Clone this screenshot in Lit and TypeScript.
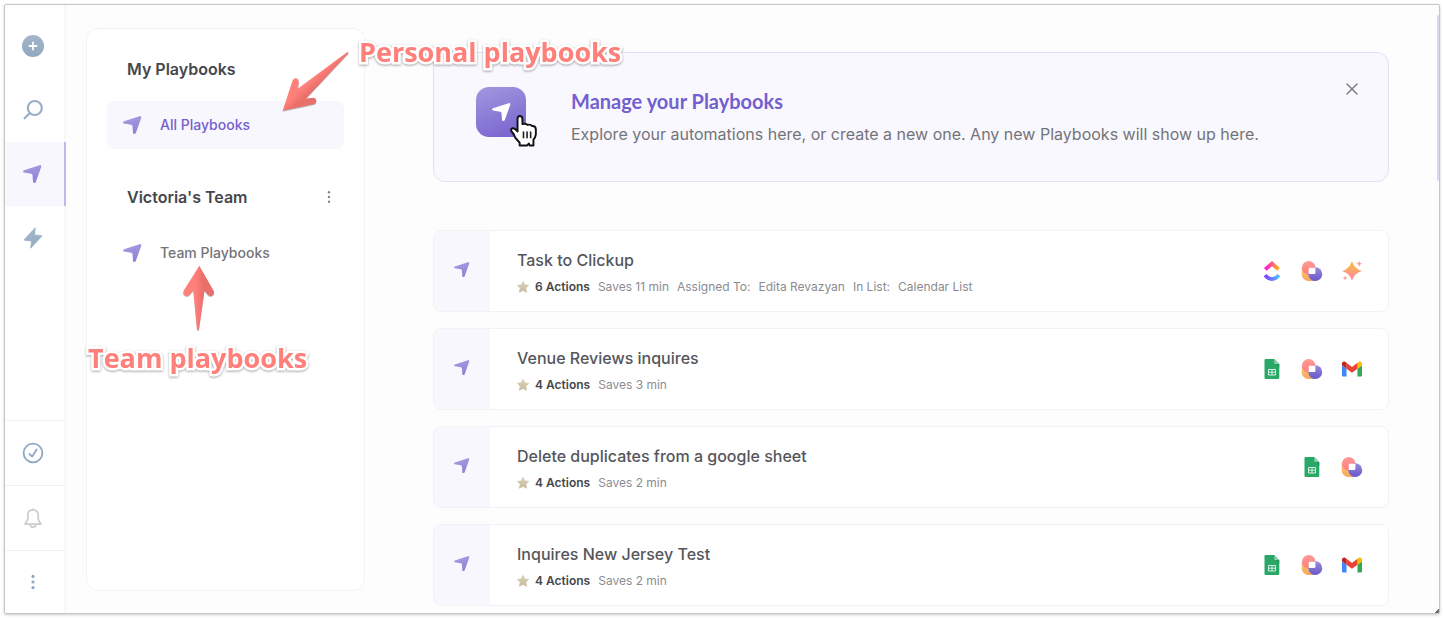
import { LitElement, html, css, svg, TemplateResult } from "lit";
import { customElement, property } from "lit/decorators.js";

const planePath =
  "M16.6.2 1 5.3C-.2 5.8-.3 7.3.9 7.6L8.2 8.8Q9.4 9 9.5 10.200L10 17Q10.200 18 11.300 18 12.400 18 12.800 17L18.200 2Q18.600-.5 16.600.2Z";

@customElement("plane-icon")
export class PlaneIcon extends LitElement {
  static styles = css`
    :host { display: block; width: 18px; height: 18px; }
    svg { display: block; width: 100%; height: 100%; overflow: visible; }
  `;
  @property({ type: Boolean }) plain = false;
  render() {
    return html`<svg viewBox="0 0 18 18" aria-hidden="true">
      <defs><linearGradient id="g" x1="0" y1="0" x2="0.3" y2="1">
        <stop offset="0" stop-color="#a99fe0" /><stop offset="1" stop-color="#9182d8" />
      </linearGradient></defs>
      <path d=${planePath} fill=${this.plain ? "#fff" : "url(#g)"} />
    </svg>`;
  }
}

type AppName = "clickup" | "bardeen" | "magic" | "sheets" | "gmail";

const appIcons: Record<AppName, TemplateResult> = {
  clickup: svg`<svg viewBox="0 0 24 24"><defs>
      <linearGradient id="up"><stop offset="0" stop-color="#ff02f0"/><stop offset=".5" stop-color="#fb5d80"/><stop offset="1" stop-color="#ffc800"/></linearGradient>
      <linearGradient id="dn"><stop offset="0" stop-color="#8930fd"/><stop offset="1" stop-color="#49ccf9"/></linearGradient></defs>
      <path fill="url(#dn)" d="M2 18.439l3.690-2.828c1.961 2.560 4.044 3.739 6.363 3.739 2.307 0 4.330-1.166 6.203-3.704L22 18.405C19.298 22.065 15.941 24 12.053 24 8.178 24 4.788 22.078 2 18.439z"/>
      <path fill="url(#up)" d="M12.040 6.150l-6.568 5.660-3.036-3.520L12.055 0l9.543 8.296-3.050 3.509z"/></svg>`,
  bardeen: svg`<svg viewBox="0 0 20 20"><defs>
      <linearGradient id="pk" x1="0" y1="0" x2="0" y2="1"><stop offset="0" stop-color="#ff9a98"/><stop offset="1" stop-color="#fd807d"/></linearGradient>
      <linearGradient id="pu" x1="0" y1="0" x2="0" y2="1"><stop offset="0" stop-color="#978bdb"/><stop offset="1" stop-color="#6a55cb"/></linearGradient>
      <linearGradient id="og" x1="0" y1="0" x2="0" y2="1"><stop offset="0" stop-color="#fcc274"/><stop offset="1" stop-color="#f6a85c"/></linearGradient></defs>
      <path fill="url(#og)" d="M-.3 7H13v13H6.500A6.800 6.800 0 0 1-.3 13.200z"/>
      <circle cx="6.700" cy="6.700" r="6.800" fill="url(#pk)"/>
      <circle cx="13.300" cy="13.200" r="6.900" fill="url(#pu)"/>
      <path fill="#fff" d="M6.700 8q0-1.300 1.300-1.300h5.400v5q0 1.400-1.400 1.400H6.700z"/></svg>`,
  magic: svg`<svg viewBox="0 0 20 20"><defs>
      <linearGradient id="mg" x1="0" y1="0" x2="0" y2="20" gradientUnits="userSpaceOnUse"><stop offset="0" stop-color="#fdb62b"/><stop offset=".4" stop-color="#fca964"/><stop offset=".7" stop-color="#fd9591"/><stop offset="1" stop-color="#fd9a98"/></linearGradient></defs>
      <path fill="url(#mg)" d="M10 0Q12.200 7.800 20 10 12.200 12.200 10 20 7.800 12.200 0 10 7.800 7.800 10 0z"/>
      <path fill="#fd9a93" d="M17.200-.2l.8 2.200 2.300.8-2.300.8-.8 2.300-.8-2.300-2.300-.8 2.300-.8zM3 14.800l.7 1.500 1.500.7-1.500.7L3 19.200l-.7-1.500-1.500-.7 1.500-.7z"/></svg>`,
  sheets: svg`<svg viewBox="0 0 20 20">
      <path fill="#2aa868" d="M3.700 0h8.600l5 5v13.700q0 1.300-1.300 1.300H3.700q-1.200 0-1.200-1.300V1.300Q2.500 0 3.700 0z"/>
      <path fill="#8ed1b1" d="M12.300 0l5 5h-4q-1 0-1-1z"/><path fill="#20905a" d="M13.300 5h4v4z" opacity=".6"/>
      <path fill="none" stroke="#d6efe3" stroke-width="1" d="M6.500 10.500h7v5.500h-7zM6.500 13.200h7M10 10.500v5.500"/></svg>`,
  gmail: svg`<svg viewBox="52 42 88 66">
      <path fill="#4285f4" d="M58 108h14V74L52 59v43c0 3.320 2.690 6 6 6"/>
      <path fill="#34a853" d="M120 108h14c3.320 0 6-2.690 6-6V59l-20 15"/>
      <path fill="#fbbc04" d="M120 48v26l20-15v-8c0-7.420-8.470-11.650-14.400-7.200"/>
      <path fill="#ea4335" d="M72 74V48l24 18 24-18v26L96 92"/>
      <path fill="#c5221f" d="M52 51v8l20 15V48l-5.600-4.200c-5.940-4.450-14.400-.22-14.400 7.200"/></svg>`,
};

interface Playbook {
  title: string;
  actions: number;
  meta: string[];
  apps: AppName[];
}

const playbooks: Playbook[] = [
  { title: "Task to Clickup", actions: 6, meta: ["Saves 11 min", "Assigned To:", "Edita Revazyan", "In List:", "Calendar List"], apps: ["clickup", "bardeen", "magic"] },
  { title: "Venue Reviews inquires", actions: 4, meta: ["Saves 3 min"], apps: ["sheets", "bardeen", "gmail"] },
  { title: "Delete duplicates from a google sheet", actions: 4, meta: ["Saves 2 min"], apps: ["sheets", "bardeen"] },
  { title: "Inquires New Jersey Test", actions: 4, meta: ["Saves 2 min"], apps: ["sheets", "bardeen", "gmail"] },
];

@customElement("playbook-card")
export class PlaybookCard extends LitElement {
  static styles = css`
    :host { display: block; }
    .card { display: flex; height: 80px; border: 1px solid #f2f2f4; border-radius: 8px; background: #fff; overflow: hidden; }
    .side { flex: none; width: 56px; display: flex; align-items: center; justify-content: center; background: #f8f7fd; padding: 0 2px 4px 0; box-sizing: border-box; }
    .side plane-icon { width: 15px; height: 15px; }
    .body { flex: 1; min-width: 0; padding: 17px 0 0 27px; }
    .title { margin: 0; font-size: 16px; line-height: 24px; font-weight: 500; color: #55565b; }
    .meta { display: flex; align-items: center; gap: 8px; margin-top: 5px; font-size: 12px; line-height: 20px; color: #8b8c91; white-space: nowrap; }
    .count { display: flex; align-items: center; gap: 6px; font-weight: 600; color: #46474c; }
    .count svg { width: 12px; height: 12px; display: block; }
    .apps { display: flex; align-items: center; gap: 20px; padding-right: 26px; }
    .apps svg { display: block; width: 20px; height: 20px; overflow: visible; }
  `;
  @property({ attribute: false }) playbook!: Playbook;
  render() {
    const p = this.playbook;
    return html`<article class="card">
      <div class="side"><plane-icon></plane-icon></div>
      <div class="body">
        <h3 class="title">${p.title}</h3>
        <div class="meta">
          <span class="count">
            <svg viewBox="0 0 12 12" aria-hidden="true"><defs><linearGradient id="s" x1="0" y1="0" x2="0" y2="1"><stop offset="0" stop-color="#d9d0b8"/><stop offset="1" stop-color="#c8bc9e"/></linearGradient></defs>
            <path fill="url(#s)" stroke="url(#s)" stroke-width=".9" stroke-linejoin="round" d="M6 .4l1.700 3.500 3.900.5-2.900 2.700.8 4.100L6 9.300l-3.500 1.900.8-4.100L.4 4.400 4.300 3.900z"/></svg>
            ${p.actions} Actions</span>
          ${p.meta.map((m) => html`<span>${m}</span>`)}
        </div>
      </div>
      <div class="apps">${p.apps.map((a) => appIcons[a])}</div>
    </article>`;
  }
}

@customElement("app-root")
export class AppRoot extends LitElement {
  static styles = css`
    :host { display: block; position: relative; box-sizing: border-box; height: 100vh; padding: 4px; background: #fff; font-family: Inter, "Liberation Sans", sans-serif; color: #46474c; }
    button { border: 0; padding: 0; background: none; font: inherit; color: inherit; cursor: pointer; }
    a { color: inherit; text-decoration: none; }
    svg { display: block; overflow: visible; }
    .window { position: relative; box-sizing: border-box; height: 100%; display: flex; border: 1px solid #c6c6c6; border-radius: 2px; box-shadow: 0 1px 3px rgba(0, 0, 0, 0.2); background: #fdfdfd; overflow: hidden; }
    .rail { flex: none; width: 61px; display: flex; flex-direction: column; justify-content: space-between; box-sizing: border-box; background: linear-gradient(90deg, #fff 59px, #f8f8f9 59px); }
    .rail-top { padding-top: 9px; }
    .rail-btn { display: flex; width: 61px; height: 64px; align-items: center; justify-content: center; box-sizing: border-box; padding-right: 5px; }
    .rail-btn.on { background: #f8f7fd; border-right: 2px solid #c0b8e9; }
    .rail-low { display: flex; width: 59px; height: 65px; align-items: center; justify-content: center; box-sizing: border-box; border-top: 1px solid #f0f1f2; padding-right: 3px; }
    .rail-low:last-child { height: 63px; }
    .panel { flex: none; width: 279px; box-sizing: border-box; margin: 23px 0 22px 20px; border: 1px solid #f3f3f4; border-radius: 12px; background: #fff; padding: 28px 20px; }
    .head { display: flex; justify-content: space-between; align-items: center; padding: 0 12px 0 20px; height: 24px; margin-bottom: 20px; }
    .head h2 { margin: 0; font-size: 16px; line-height: 24px; font-weight: 600; color: #46474c; }
    .item { display: flex; align-items: center; gap: 19px; height: 48px; padding-left: 16px; border-radius: 8px; margin-bottom: 36px; font-size: 14px; line-height: 20px; font-weight: 500; color: #737479; }
    .item.on { background: #f8f7fd; color: #7460cf; }
    .main { flex: 1; min-width: 0; padding: 47px 50px 0 68px; overflow: hidden; }
    .banner { display: flex; align-items: flex-start; box-sizing: border-box; min-height: 130px; margin-bottom: 48px; padding: 34px 30px 30px 42px; border: 1px solid #e2dff6; border-radius: 12px; background: #f9f8fe; }
    .tile { position: relative; flex: none; display: flex; align-items: center; justify-content: center; width: 50px; height: 50px; border-radius: 13px; background: linear-gradient(160deg, #a297e0, #7561cd); }
    .hand { position: absolute; left: 34px; top: 28px; width: 27px; height: 32px; }
    .copy { flex: 1; padding-left: 45px; }
    .copy h1 { margin: 0 0 7px; font-family: Lato, Inter, sans-serif; font-size: 20px; line-height: 28px; font-weight: 700; color: #7360ce; }
    .copy p { margin: 0; font-size: 16px; line-height: 24px; color: #737479; }
    .close { display: flex; align-items: center; justify-content: center; width: 12px; height: 12px; margin-top: -4px; }
    .list { display: grid; gap: 16px; }
    .thumb { position: absolute; right: 0; top: 10px; width: 2px; height: 166px; border-radius: 2px; background: #dcd8f4; }
    .grip { position: absolute; right: 0; bottom: 0; width: 4px; height: 4px; background: linear-gradient(135deg, transparent 50%, #6d6d6d 50%); }
    .note { position: absolute; font-family: "Open Sans", "Noto Sans", sans-serif; font-weight: 700; font-size: 27px; line-height: 36px; color: #ff7f7a; white-space: nowrap; -webkit-text-stroke: 5px #fff; paint-order: stroke fill; filter: drop-shadow(0 1px 1px rgba(0, 0, 0, 0.35)); }
    .personal { left: 359px; top: 34px; }
    .team { left: 88px; top: 340px; }
    .arrows { position: absolute; left: 0; top: 0; width: 400px; height: 400px; pointer-events: none; filter: drop-shadow(0 1px 0 rgba(0, 0, 0, 0.25)); }
  `;

  private dots(color: string, r: number, step: number) {
    return html`<svg width="6" height="18" viewBox="0 0 6 18" aria-hidden="true" fill=${color}>
      <circle cx="3" cy=${9 - step} r=${r} /><circle cx="3" cy="9" r=${r} /><circle cx="3" cy=${9 + step} r=${r} />
    </svg>`;
  }

  render() {
    return html`
      <div class="window">
        <nav class="rail" aria-label="Main">
          <div class="rail-top">
            <button class="rail-btn" aria-label="Create">
              <svg width="22" height="22" viewBox="0 0 22 22"><defs><linearGradient id="b" x1="0" y1="0" x2="0" y2="1"><stop offset="0" stop-color="#a4b5ca"/><stop offset="1" stop-color="#8fa8c0"/></linearGradient></defs>
              <circle cx="11" cy="11" r="11" fill="url(#b)"/><path d="M11 7.500v7M7.500 11h7" stroke="#fff" stroke-width="1.800" stroke-linecap="round"/></svg>
            </button>
            <button class="rail-btn" aria-label="Search">
              <svg width="20" height="20" viewBox="0 0 20 20" fill="none" stroke="#9ab0c6" stroke-width="2.200" stroke-linecap="round"><circle cx="11.800" cy="8" r="7"/><path d="M6.800 13.200L1.500 18.300"/></svg>
            </button>
            <button class="rail-btn on" aria-label="Playbooks"><plane-icon></plane-icon></button>
            <button class="rail-btn" aria-label="Autobooks">
              <svg width="18" height="22" viewBox="0 0 18 22"><defs><linearGradient id="z" x1="0" y1="0" x2="0" y2="1"><stop offset="0" stop-color="#a6b6cb"/><stop offset="1" stop-color="#93abc4"/></linearGradient></defs>
              <path fill="url(#z)" stroke="url(#z)" stroke-width=".6" stroke-linejoin="round" d="M11.300.6L.2 12.500q-.3.700.4.900L7.500 14 6.600 21.300 17.900 9.300q.3-.7-.4-.9L10.800 8z"/></svg>
            </button>
          </div>
          <div>
            <button class="rail-low" aria-label="Tasks">
              <svg width="20" height="20" viewBox="0 0 20 20" fill="none" stroke="#8fa9c4" stroke-width="1.800" stroke-linecap="round" stroke-linejoin="round"><circle cx="10" cy="10" r="9.400"/><path d="M6.300 11l2.900 2.500L13.600 6.500"/></svg>
            </button>
            <button class="rail-low" aria-label="Notifications">
              <svg width="18" height="20" viewBox="0 0 18 20" fill="none" stroke="#cbcccd" stroke-width="1.700" stroke-linejoin="round"><path d="M9 .4v1.400M9 1.800c-3.300 0-5.200 2.200-5.200 5.400v3.600c0 1.800-1.700 3.200-2.700 5.400h15.800c-1-2.200-2.700-3.600-2.700-5.400V7.200C14.200 4 12.300 1.800 9 1.800zM6.300 16.400c0 1.600 1.100 2.700 2.700 2.700s2.700-1.100 2.700-2.700"/></svg>
            </button>
            <button class="rail-low" aria-label="More">${this.dots("#8fa9c4", 1.6, 5.6)}</button>
          </div>
        </nav>

        <aside class="panel">
          <div class="head"><h2>My Playbooks</h2></div>
          <a class="item on" href="#all"><plane-icon></plane-icon>All Playbooks</a>
          <div class="head"><h2>Victoria's Team</h2><button aria-label="Team menu">${this.dots("#85868a", 1.2, 4.7)}</button></div>
          <a class="item" href="#team"><plane-icon></plane-icon>Team Playbooks</a>
        </aside>

        <main class="main">
          <section class="banner">
            <div class="tile">
              <plane-icon plain></plane-icon>
              <svg class="hand" viewBox="0 0 28 33" aria-hidden="true">
                <path fill="#fff" stroke="#111" stroke-width="2" stroke-linejoin="round" d="M7.800 3.800Q8 1 10.200 1 12.700 1 12.900 3.800V9.300Q17 8.300 18.200 10.200 21.500 9.200 22.800 11.300 26.500 11 26.800 14.500V20Q26.500 23 24.300 25.500V31.500H20.500L19.500 29.500 17.800 31.500H10V28.500L5.500 23.500Q4 19.500 1.300 16.500.6 14 3 13.700 5 13.500 7.800 17z"/>
                <path fill="none" stroke="#222" stroke-width="1.700" d="M14 17v7M17.700 17v7M21.400 17v7"/>
              </svg>
            </div>
            <div class="copy">
              <h1>Manage your Playbooks</h1>
              <p>Explore your automations here, or create a new one. Any new Playbooks will show up here.</p>
            </div>
            <button class="close" aria-label="Dismiss">
              <svg width="12" height="12" viewBox="0 0 12 12" stroke="#7d7e82" stroke-width="1.500" stroke-linecap="round"><path d="M1 1l10 10M11 1L1 11"/></svg>
            </button>
          </section>
          <section class="list">${playbooks.map((p) => html`<playbook-card .playbook=${p}></playbook-card>`)}</section>
        </main>
        <div class="thumb"></div>
        <div class="grip"></div>
      </div>

      <svg class="arrows" viewBox="0 0 400 400" aria-hidden="true">
        <defs>
          <linearGradient id="a1" gradientUnits="userSpaceOnUse" x1="305" y1="84" x2="314" y2="94"><stop offset=".1" stop-color="#ff807b"/><stop offset=".7" stop-color="#e96f6b"/></linearGradient>
          <linearGradient id="a2" gradientUnits="userSpaceOnUse" x1="190" y1="0" x2="208" y2="0"><stop offset=".3" stop-color="#ff807b"/><stop offset=".75" stop-color="#e96f6b"/></linearGradient>
        </defs>
        <path fill="url(#a1)" d="M282.700 110.700L292.600 80.500Q294 77.800 296.800 78.500 299.200 79.500 298.800 82.500L298 88.500 347 52.200Q348.800 51.800 348.200 53.500L306 98.500 313 97.800Q316 98 316.300 100.500 316.300 103.500 313.500 104.200Z"/>
        <path fill="url(#a2)" d="M199.300 265.800L213.500 290.500Q214.800 293.500 212.800 295.300 210.500 297 208 295L204.500 290.500 199 329.300Q198 331 197 329.300L193.300 290.500 189.500 295Q187 297 184.500 295.300 182.500 293.500 183.800 290.500Z"/>
      </svg>
      <div class="note personal">Personal playbooks</div>
      <div class="note team">Team playbooks</div>
    `;
  }
}
